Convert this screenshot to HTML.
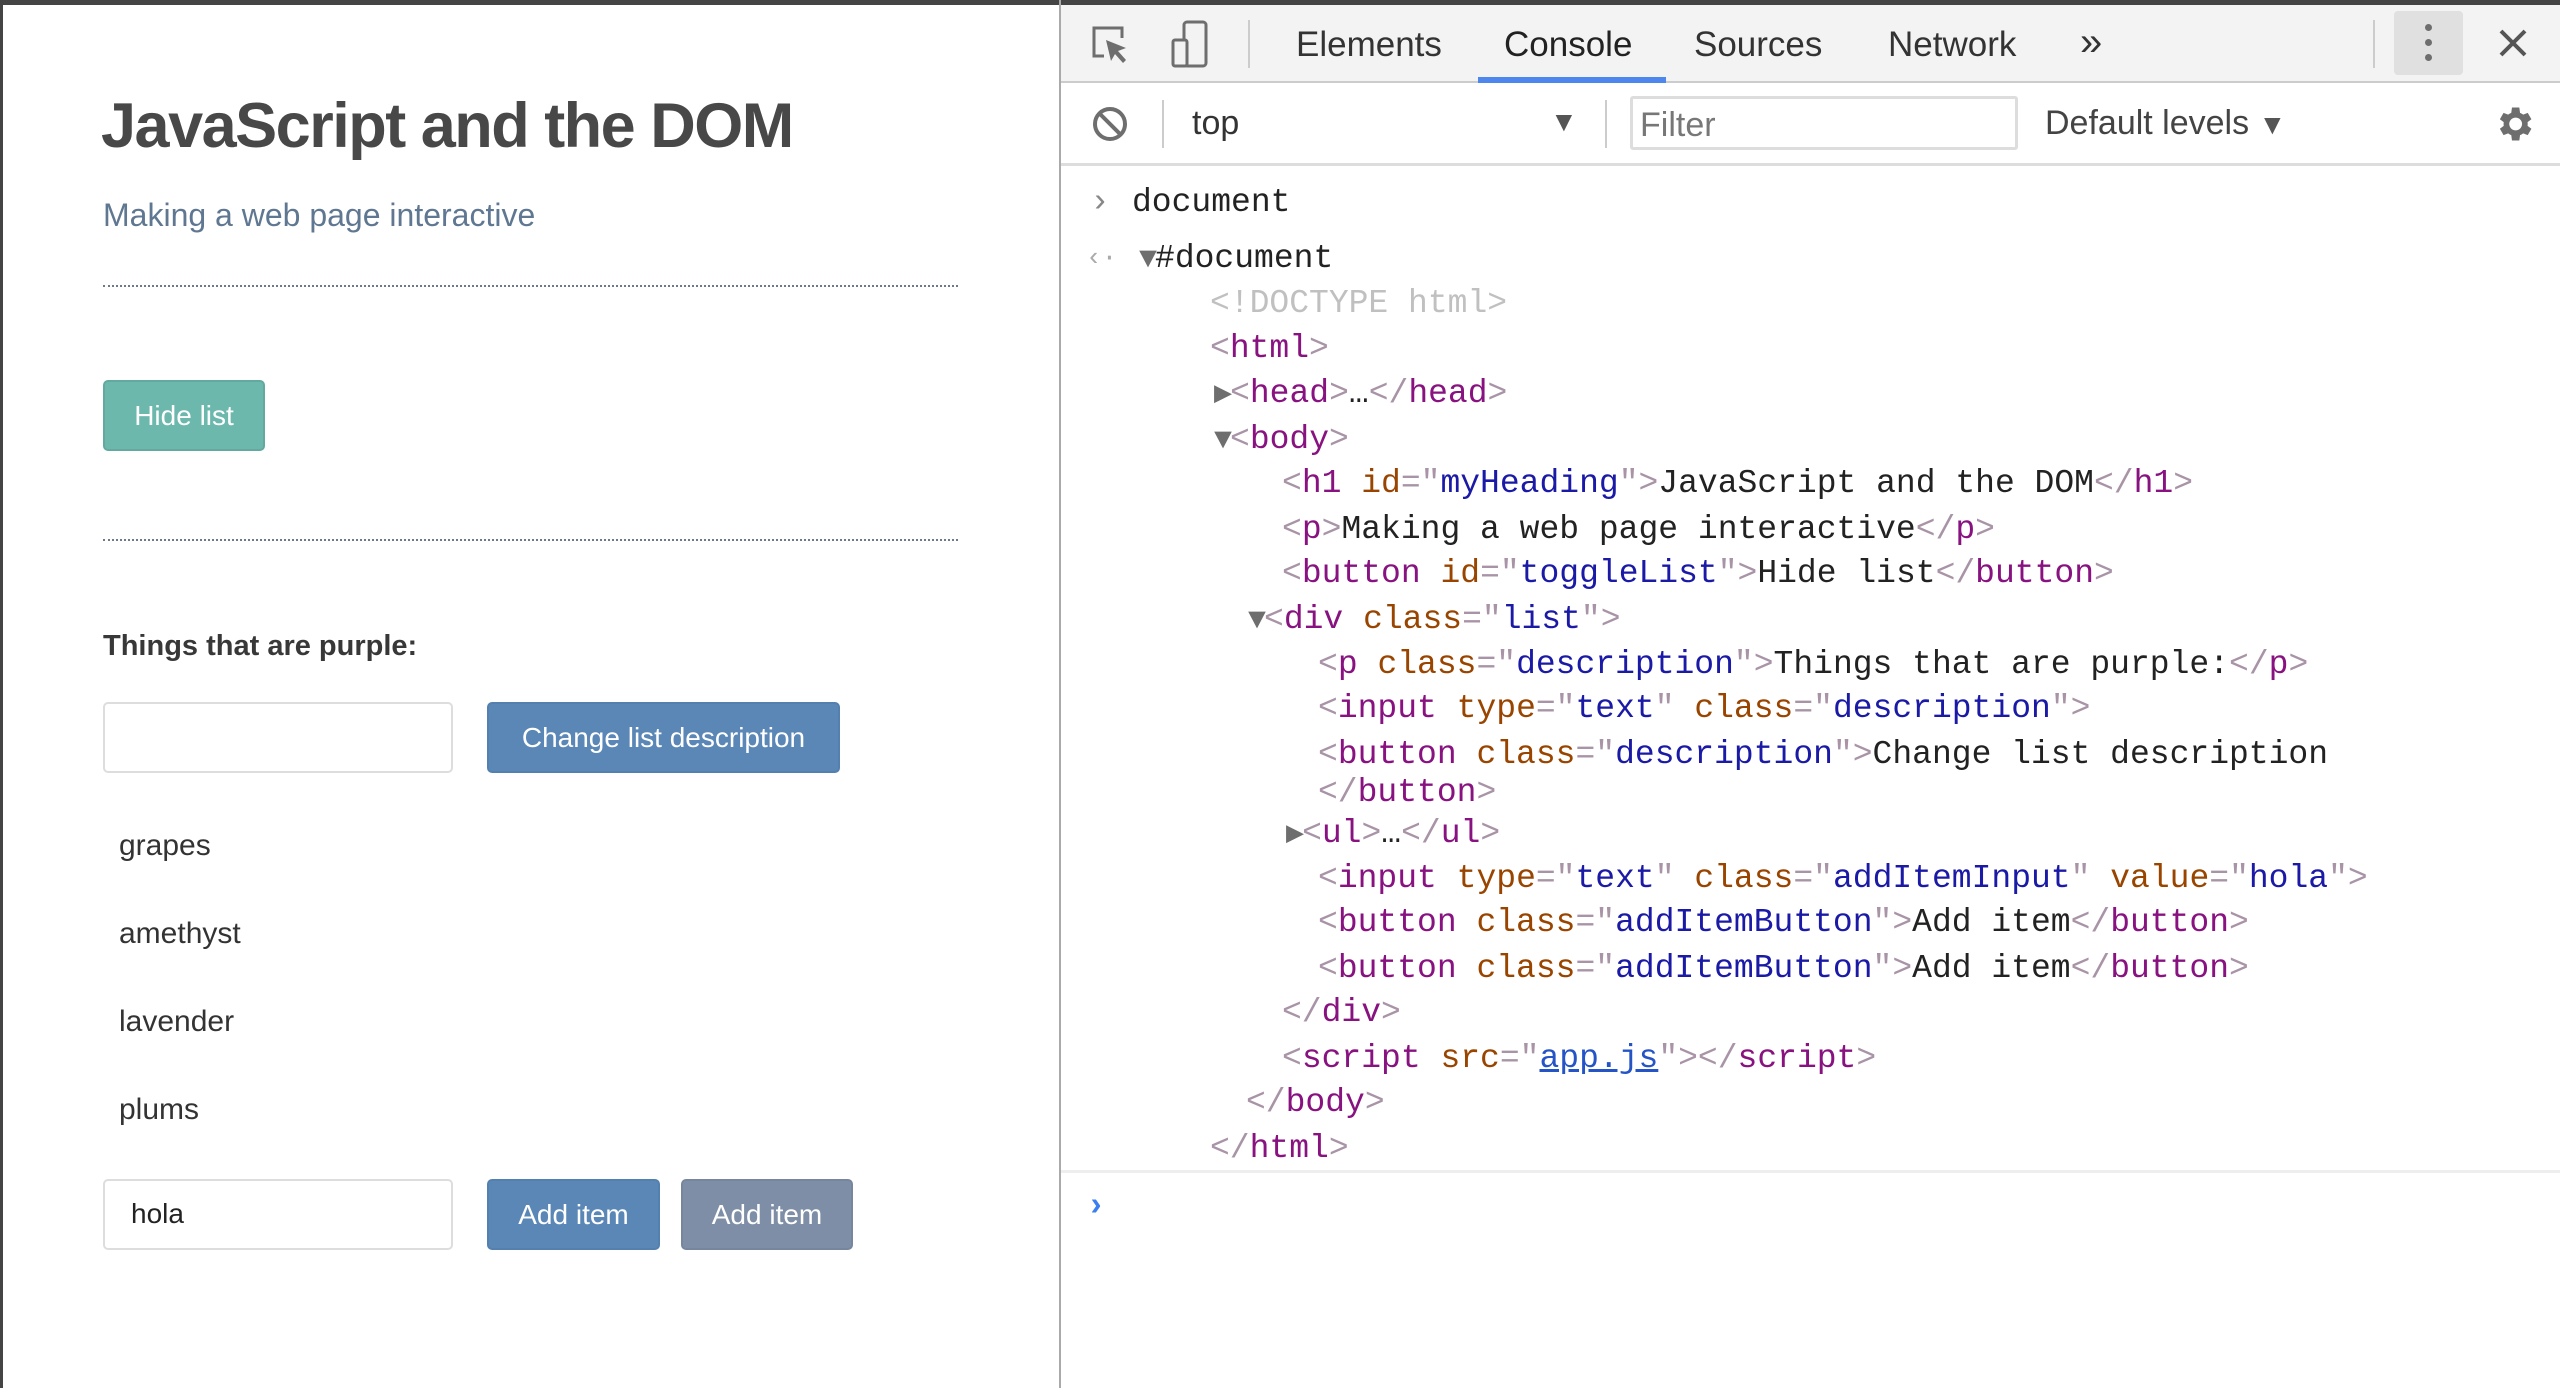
<!DOCTYPE html>
<html><head><style>
*{margin:0;padding:0;box-sizing:border-box}
body{width:2560px;height:1388px;position:relative;background:#fff;overflow:hidden;font-family:"Liberation Sans",sans-serif}
.a{position:absolute;white-space:nowrap}
.l{position:absolute;white-space:pre;font-family:"Liberation Mono",monospace;font-size:33px;line-height:45px;height:45px;color:#222;margin-top:3px}
.t{color:#881280}.b{color:#a894a6}.n{color:#994500}.v{color:#1a1aa6}
.tri{color:#6e6e6e;font-size:30px;margin-right:-2px}
.btn{position:absolute;border-radius:5px;color:#fff;font-size:28px;display:flex;align-items:center;justify-content:center}
.inp{position:absolute;border:2px solid #ddd;border-radius:5px;background:#fff}
.tab{position:absolute;top:22px;font-size:35px;color:#333;line-height:45px}
</style></head><body>
<div class="a" style="left:0;top:0;width:2560px;height:5px;background:#444"></div>
<div class="a" style="left:0;top:0;width:3px;height:1388px;background:#444"></div>
<!-- page -->
<div class="a" style="left:101px;top:90px;font-size:63px;font-weight:bold;color:#484848;letter-spacing:-1.5px">JavaScript and the DOM</div>
<div class="a" style="left:103px;top:197px;font-size:32px;color:#5f7791">Making a web page interactive</div>
<div class="a" style="left:103px;top:285px;width:855px;border-top:2px dotted #6c7a89"></div>
<div class="a" style="left:103px;top:539px;width:855px;border-top:2px dotted #6c7a89"></div>
<div class="btn" style="left:103px;top:380px;width:162px;height:71px;background:#6cb8ad;border:2px solid #62aa9f">Hide list</div>
<div class="a" style="left:103px;top:630px;font-size:29px;font-weight:bold;color:#383838">Things that are purple:</div>
<div class="inp" style="left:103px;top:702px;width:350px;height:71px"></div>
<div class="btn" style="left:487px;top:702px;width:353px;height:71px;background:#5b87b7;border:2px solid #5480b0">Change list description</div>
<div class="a" style="left:119px;top:829px;font-size:30px;color:#333">grapes</div>
<div class="a" style="left:119px;top:917px;font-size:30px;color:#333">amethyst</div>
<div class="a" style="left:119px;top:1005px;font-size:30px;color:#333">lavender</div>
<div class="a" style="left:119px;top:1093px;font-size:30px;color:#333">plums</div>
<div class="inp" style="left:103px;top:1179px;width:350px;height:71px"></div>
<div class="a" style="left:131px;top:1198px;font-size:28px;color:#222">hola</div>
<div class="btn" style="left:487px;top:1179px;width:173px;height:71px;background:#5b87b7;border:2px solid #5480b0">Add item</div>
<div class="btn" style="left:681px;top:1179px;width:172px;height:71px;background:#7e8ea6;border:2px solid #76869e">Add item</div>
<!-- devtools -->
<div class="a" style="left:1059px;top:0;width:2px;height:1388px;background:#aaa"></div>
<div class="a" style="left:1061px;top:5px;width:1499px;height:78px;background:#f3f3f3;border-bottom:2px solid #ccc"></div>
<svg class="a" style="left:1090px;top:24px" width="40" height="44" viewBox="0 0 40 44"><path d="M14 32H4V4h28v10" fill="none" stroke="#6e6e6e" stroke-width="3"/><path d="M16 16l20 8-8 3 8 9-3 3-8-9-4 7z" fill="#6e6e6e"/></svg>
<svg class="a" style="left:1170px;top:20px" width="40" height="50" viewBox="0 0 40 50"><rect x="14" y="2" width="22" height="44" rx="3" fill="none" stroke="#6e6e6e" stroke-width="3"/><rect x="3" y="20" width="14" height="26" rx="2" fill="#f3f3f3" stroke="#6e6e6e" stroke-width="3"/></svg>
<div class="a" style="left:1248px;top:20px;width:2px;height:48px;background:#ccc"></div>
<div class="tab" style="left:1296px">Elements</div>
<div class="tab" style="left:1504px;color:#222">Console</div>
<div class="tab" style="left:1694px">Sources</div>
<div class="tab" style="left:1888px">Network</div>
<div class="tab" style="left:2080px;font-size:40px;top:20px">»</div>
<div class="a" style="left:1478px;top:77px;width:188px;height:6px;background:#4d86ec"></div>
<div class="a" style="left:2373px;top:20px;width:2px;height:48px;background:#ccc"></div>
<div class="a" style="left:2394px;top:11px;width:69px;height:64px;background:#e0e0e0;border-radius:4px"></div>
<div class="a" style="left:2425px;top:24px;width:7px;height:7px;border-radius:50%;background:#6e6e6e;box-shadow:0 15px 0 #6e6e6e,0 30px 0 #6e6e6e"></div>
<svg class="a" style="left:2497px;top:27px" width="32" height="32" viewBox="0 0 32 32"><path d="M4 4L28 28M28 4L4 28" stroke="#555" stroke-width="4"/></svg>
<div class="a" style="left:1061px;top:163px;width:1499px;height:3px;background:#ddd"></div>
<svg class="a" style="left:1090px;top:104px" width="40" height="40" viewBox="0 0 40 40"><circle cx="20" cy="20" r="15" fill="none" stroke="#6e6e6e" stroke-width="4"/><path d="M10 10L30 30" stroke="#6e6e6e" stroke-width="4"/></svg>
<div class="a" style="left:1162px;top:100px;width:2px;height:48px;background:#ccc"></div>
<div class="a" style="left:1192px;top:104px;font-size:34px;color:#333">top</div>
<div class="a" style="left:1550px;top:106px;font-size:28px;color:#555">▼</div>
<div class="a" style="left:1605px;top:100px;width:2px;height:48px;background:#ccc"></div>
<div class="a" style="left:1630px;top:96px;width:388px;height:54px;border:3px solid #ddd;border-radius:3px"></div>
<div class="a" style="left:1640px;top:106px;font-size:34px;color:#777">Filter</div>
<div class="a" style="left:2045px;top:104px;font-size:34px;color:#444">Default levels <span style="font-size:28px;color:#555">▼</span></div>
<svg class="a" style="left:2492px;top:102px" width="44" height="44" viewBox="0 0 24 24"><path fill="#6e6e6e" d="M19.4 13a7.5 7.5 0 000-2l2.1-1.6-2-3.5-2.5 1a7 7 0 00-1.7-1L14.9 3h-4l-.4 2.9a7 7 0 00-1.7 1l-2.5-1-2 3.5L6.4 11a7.5 7.5 0 000 2l-2.1 1.6 2 3.5 2.5-1a7 7 0 001.7 1l.4 2.9h4l.4-2.9a7 7 0 001.7-1l2.5 1 2-3.5zM12.9 15.5a3.5 3.5 0 110-7 3.5 3.5 0 010 7z"/></svg>
<!-- console -->
<div class="l" style="left:1090px;top:177px;color:#888">›</div>
<div class="l" style="left:1132px;top:177px">document</div>
<div class="l" style="left:1086px;top:233px;color:#aaa;font-size:26px">‹·</div>
<div class="l" style="left:1139px;top:233px"><span class="tri">▼</span>#document</div>
<div class="l" style="left:1210px;top:278px;color:#c0c0c0">&lt;!DOCTYPE html&gt;</div>
<div class="l" style="left:1210px;top:323px"><span class="b">&lt;</span><span class="t">html</span><span class="b">&gt;</span></div>
<div class="l" style="left:1214px;top:368px"><span class="tri">▶</span><span class="b">&lt;</span><span class="t">head</span><span class="b">&gt;</span>…<span class="b">&lt;/</span><span class="t">head</span><span class="b">&gt;</span></div>
<div class="l" style="left:1214px;top:414px"><span class="tri">▼</span><span class="b">&lt;</span><span class="t">body</span><span class="b">&gt;</span></div>
<div class="l" style="left:1282px;top:458px"><span class="b">&lt;</span><span class="t">h1</span> <span class="n">id</span><span class="b">="</span><span class="v">myHeading</span><span class="b">"&gt;</span>JavaScript and the DOM<span class="b">&lt;/</span><span class="t">h1</span><span class="b">&gt;</span></div>
<div class="l" style="left:1282px;top:504px"><span class="b">&lt;</span><span class="t">p</span><span class="b">&gt;</span>Making a web page interactive<span class="b">&lt;/</span><span class="t">p</span><span class="b">&gt;</span></div>
<div class="l" style="left:1282px;top:548px"><span class="b">&lt;</span><span class="t">button</span> <span class="n">id</span><span class="b">="</span><span class="v">toggleList</span><span class="b">"&gt;</span>Hide list<span class="b">&lt;/</span><span class="t">button</span><span class="b">&gt;</span></div>
<div class="l" style="left:1248px;top:594px"><span class="tri">▼</span><span class="b">&lt;</span><span class="t">div</span> <span class="n">class</span><span class="b">="</span><span class="v">list</span><span class="b">"&gt;</span></div>
<div class="l" style="left:1318px;top:639px"><span class="b">&lt;</span><span class="t">p</span> <span class="n">class</span><span class="b">="</span><span class="v">description</span><span class="b">"&gt;</span>Things that are purple:<span class="b">&lt;/</span><span class="t">p</span><span class="b">&gt;</span></div>
<div class="l" style="left:1318px;top:683px"><span class="b">&lt;</span><span class="t">input</span> <span class="n">type</span><span class="b">="</span><span class="v">text</span><span class="b">"</span> <span class="n">class</span><span class="b">="</span><span class="v">description</span><span class="b">"&gt;</span></div>
<div class="l" style="left:1318px;top:729px"><span class="b">&lt;</span><span class="t">button</span> <span class="n">class</span><span class="b">="</span><span class="v">description</span><span class="b">"&gt;</span>Change list description</div>
<div class="l" style="left:1318px;top:767px"><span class="b">&lt;/</span><span class="t">button</span><span class="b">&gt;</span></div>
<div class="l" style="left:1286px;top:808px"><span class="tri">▶</span><span class="b">&lt;</span><span class="t">ul</span><span class="b">&gt;</span>…<span class="b">&lt;/</span><span class="t">ul</span><span class="b">&gt;</span></div>
<div class="l" style="left:1318px;top:853px"><span class="b">&lt;</span><span class="t">input</span> <span class="n">type</span><span class="b">="</span><span class="v">text</span><span class="b">"</span> <span class="n">class</span><span class="b">="</span><span class="v">addItemInput</span><span class="b">"</span> <span class="n">value</span><span class="b">="</span><span class="v">hola</span><span class="b">"&gt;</span></div>
<div class="l" style="left:1318px;top:897px"><span class="b">&lt;</span><span class="t">button</span> <span class="n">class</span><span class="b">="</span><span class="v">addItemButton</span><span class="b">"&gt;</span>Add item<span class="b">&lt;/</span><span class="t">button</span><span class="b">&gt;</span></div>
<div class="l" style="left:1318px;top:943px"><span class="b">&lt;</span><span class="t">button</span> <span class="n">class</span><span class="b">="</span><span class="v">addItemButton</span><span class="b">"&gt;</span>Add item<span class="b">&lt;/</span><span class="t">button</span><span class="b">&gt;</span></div>
<div class="l" style="left:1282px;top:987px"><span class="b">&lt;/</span><span class="t">div</span><span class="b">&gt;</span></div>
<div class="l" style="left:1282px;top:1033px"><span class="b">&lt;</span><span class="t">script</span> <span class="n">src</span><span class="b">="</span><span style="color:#2554c7;text-decoration:underline">app.js</span><span class="b">"&gt;&lt;/</span><span class="t">script</span><span class="b">&gt;</span></div>
<div class="l" style="left:1246px;top:1077px"><span class="b">&lt;/</span><span class="t">body</span><span class="b">&gt;</span></div>
<div class="l" style="left:1210px;top:1123px"><span class="b">&lt;/</span><span class="t">html</span><span class="b">&gt;</span></div>
<div class="a" style="left:1061px;top:1170px;width:1499px;height:3px;background:#eee"></div>
<div class="l" style="left:1086px;top:1181px;color:#3c7ff0;font-weight:bold">›</div>
</body></html>
